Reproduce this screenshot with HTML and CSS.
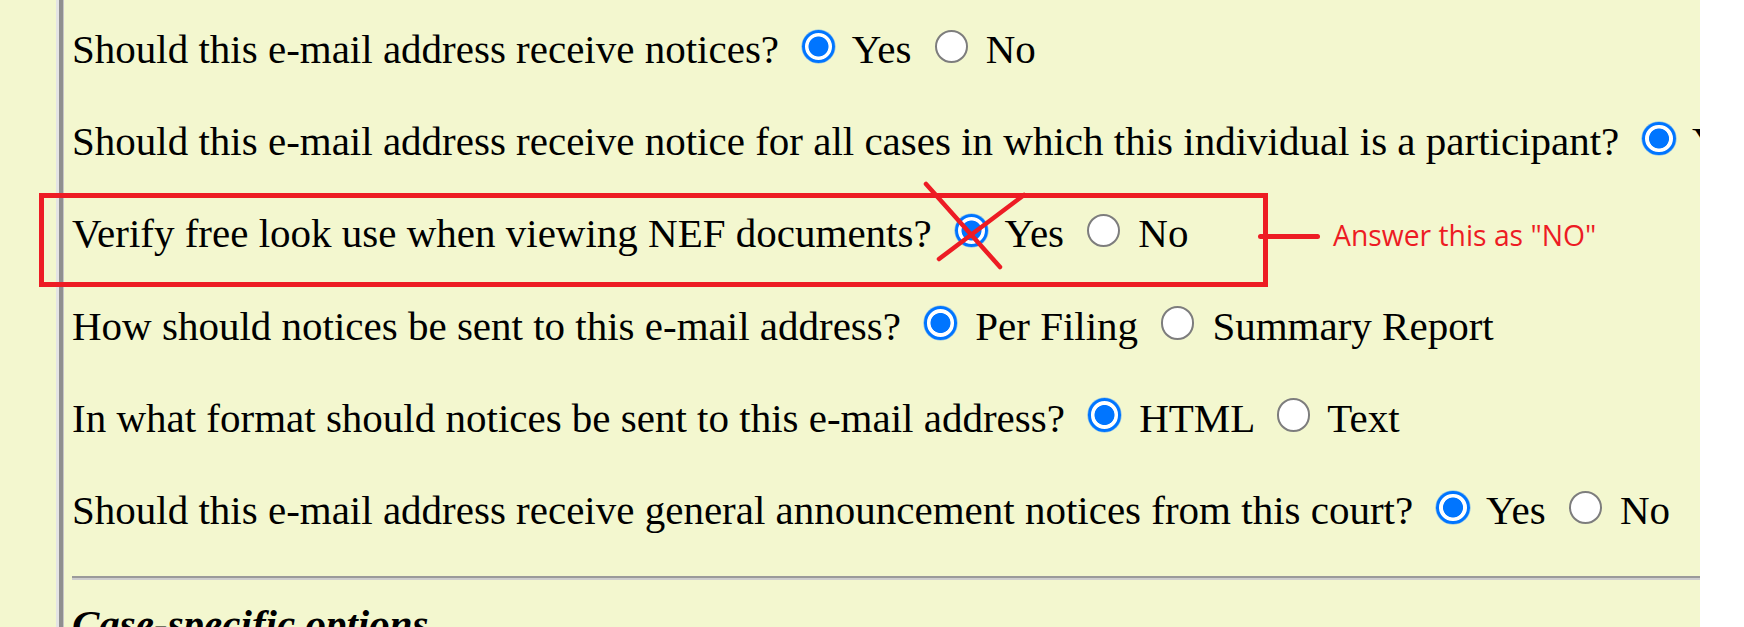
FILE: index.html
```html
<!DOCTYPE html>
<html lang="en">
<head>
<meta charset="utf-8">
<title>E-mail notice options</title>
<link rel="stylesheet" href="styles.css">
</head>
<body>
<div class="screen">
  <div class="page">
    <div class="sidebar"></div>
    <div class="divider"></div>
    <main class="content">
      <p class="q">Should this e-mail address receive notices? <input class="radio" type="radio" name="q1" checked> Yes <input class="radio" type="radio" name="q1"> No</p>
      <p class="q">Should this e-mail address receive notice for all cases in which this individual is a participant? <input class="radio" type="radio" name="q2" checked> Yes <input class="radio" type="radio" name="q2"> No</p>
      <p class="q">Verify free look use when viewing NEF documents? <input class="radio" type="radio" name="q3" checked> Yes <input class="radio" type="radio" name="q3"> No</p>
      <p class="q">How should notices be sent to this e-mail address? <input class="radio" type="radio" name="q4" checked> Per Filing <input class="radio" type="radio" name="q4"> Summary Report</p>
      <p class="q">In what format should notices be sent to this e-mail address? <input class="radio" type="radio" name="q5" checked> HTML <input class="radio" type="radio" name="q5"> Text</p>
      <p class="q">Should this e-mail address receive general announcement notices from this court? <input class="radio" type="radio" name="q6" checked> Yes <input class="radio" type="radio" name="q6"> No</p>
      <hr class="rule">
      <p class="section"><b><i>Case-specific options</i></b></p>
    </main>

    <div class="callout-box"></div>
    <svg class="cross" width="110" height="95" viewBox="0 0 110 95" aria-hidden="true">
      <line x1="6" y1="6" x2="80" y2="89"/>
      <line x1="104" y1="17" x2="19" y2="81"/>
    </svg>
    <div class="connector"></div>
    <div class="note">Answer this as "NO"</div>
  </div>
</div>
</body>
</html>
```

FILE: styles.css
```css
html, body {
  margin: 0;
  padding: 0;
  background: #ffffff;
}

.screen {
  width: 1744px;
  height: 627px;
  overflow: hidden;
  background: #ffffff;
}

.page {
  position: relative;
  width: 1700px;
  height: 627px;
  overflow: hidden;
  background: #f3f7cf;
  display: flex;
  font-family: "Liberation Serif", "Times New Roman", serif;
  color: #000000;
}

.sidebar {
  flex: none;
  width: 56px;
}

.divider {
  flex: none;
  width: 3px;
  background: #e4e4e4;
  border-right: 4px solid #8f8f8f;
  box-shadow: 1px 0 0 #c6c6c6;
}

.content {
  flex: 1;
  min-width: 0;
  padding: 22px 0 0 9px;
}

.q {
  margin: 0;
  height: 92.2px;
  font-size: 41px;
  white-space: nowrap;
}

.radio {
  -webkit-appearance: none;
  appearance: none;
  box-sizing: border-box;
  width: 33.3px;
  height: 33.3px;
  margin: 7.7px 7.7px 0 12.8px;
  border: 2.6px solid #7d7d7d;
  border-radius: 50%;
  background: #ffffff;
  vertical-align: baseline;
}

.radio:checked {
  border: 3px solid #0075ff;
  background: radial-gradient(circle, #0075ff 0, #0075ff 9.6px, #ffffff 10.4px);
  box-shadow: 0 0 0 0.6px rgba(0, 117, 255, 0.45);
}

.rule {
  margin: 1px 0 0;
  height: 0;
  border: 0;
  border-top: 2px solid #9a9a9a;
  border-bottom: 2px solid #cdcdcd;
}

.section {
  margin: 20px 0 0;
  font-size: 41px;
  white-space: nowrap;
}

/* red annotation layer drawn over the form */
.callout-box {
  position: absolute;
  left: 39px;
  top: 193px;
  width: 1229px;
  height: 94px;
  box-sizing: border-box;
  border: 5px solid #ed1c24;
}

.cross {
  position: absolute;
  left: 920px;
  top: 178px;
}

.cross line {
  stroke: #ed1c24;
  stroke-width: 4.5;
  stroke-linecap: round;
}

.connector {
  position: absolute;
  left: 1258px;
  top: 234px;
  width: 62px;
  height: 5px;
  border-radius: 3px;
  background: #ed1c24;
}

.note {
  position: absolute;
  left: 1333px;
  top: 221px;
  font-family: "Open Sans", "Noto Sans", sans-serif;
  font-size: 28.3px;
  line-height: 1;
  color: #ed1c24;
  white-space: nowrap;
}
```
